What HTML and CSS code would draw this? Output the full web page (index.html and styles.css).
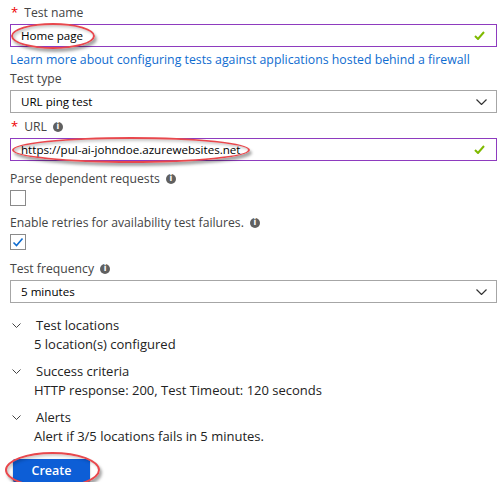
FILE: index.html
```html
<!DOCTYPE html>
<html lang="en">
<head>
<meta charset="utf-8">
<title>Availability test</title>
<link rel="stylesheet" href="styles.css">
</head>
<body>
<div class="form">
  <div class="label lbl-first"><span class="req">*</span>Test name</div>
  <div class="control input dirty">
    <span class="value">Home page</span>
    <svg class="ok" width="11" height="9" viewBox="0 0 11 9"><path d="M1 5 L4 8 L10 1" fill="none" stroke="#7fba00" stroke-width="2"/></svg>
    <span class="mark mark-name"></span>
  </div>
  <a class="link" href="#">Learn more about configuring tests against applications hosted behind a firewall</a>

  <div class="label lbl-type">Test type</div>
  <div class="control select">
    <span class="value">URL ping test</span>
    <svg class="chev" width="11" height="6" viewBox="0 0 11 6"><path d="M0.5 0.5 L5.5 5.5 L10.5 0.5" fill="none" stroke="#333" stroke-width="1.2"/></svg>
  </div>

  <div class="label lbl-url"><span class="req">*</span>URL<span class="info">i</span></div>
  <div class="control input dirty">
    <span class="value">https://pul-ai-johndoe.azurewebsites.net</span>
    <svg class="ok" width="11" height="9" viewBox="0 0 11 9"><path d="M1 5 L4 8 L10 1" fill="none" stroke="#7fba00" stroke-width="2"/></svg>
    <span class="mark mark-url"></span>
  </div>

  <div class="label lbl-parse">Parse dependent requests<span class="info">i</span></div>
  <div class="checkbox"></div>

  <div class="label lbl-retry">Enable retries for availability test failures.<span class="info">i</span></div>
  <div class="checkbox">
    <svg width="14" height="14" viewBox="0 0 14 14"><path d="M2.5 7.5 L5.5 10.5 L11.5 3.5" fill="none" stroke="#0f6cd0" stroke-width="1.6"/></svg>
  </div>

  <div class="label lbl-freq">Test frequency<span class="info">i</span></div>
  <div class="control select">
    <span class="value">5 minutes</span>
    <svg class="chev" width="11" height="6" viewBox="0 0 11 6"><path d="M0.5 0.5 L5.5 5.5 L10.5 0.5" fill="none" stroke="#333" stroke-width="1.2"/></svg>
  </div>

  <div class="section first-section">
    <div class="sec-head">
      <svg class="sec-chev" width="9" height="5" viewBox="0 0 9 5"><path d="M0.5 0.5 L4.5 4.5 L8.5 0.5" fill="none" stroke="#444" stroke-width="1"/></svg>
      <span>Test locations</span>
    </div>
    <div class="sec-body">5 location(s) configured</div>
  </div>
  <div class="section">
    <div class="sec-head">
      <svg class="sec-chev" width="9" height="5" viewBox="0 0 9 5"><path d="M0.5 0.5 L4.5 4.5 L8.5 0.5" fill="none" stroke="#444" stroke-width="1"/></svg>
      <span>Success criteria</span>
    </div>
    <div class="sec-body">HTTP response: 200, Test Timeout: 120 seconds</div>
  </div>
  <div class="section">
    <div class="sec-head">
      <svg class="sec-chev" width="9" height="5" viewBox="0 0 9 5"><path d="M0.5 0.5 L4.5 4.5 L8.5 0.5" fill="none" stroke="#444" stroke-width="1"/></svg>
      <span>Alerts</span>
    </div>
    <div class="sec-body">Alert if 3/5 locations fails in 5 minutes.</div>
  </div>

  <div class="actions">
    <button class="btn">Create<span class="mark mark-btn"></span></button>
  </div>
</div>
</body>
</html>
```
FILE: styles.css
```css
* { box-sizing: border-box; }
html, body { margin: 0; padding: 0; background: #fff; }
body {
  font-family: "Open Sans", "Noto Sans", sans-serif;
  font-size: 12.2px;
  color: #333;
}
.form {
  width: 497px;
  padding: 4px 0 0 10px;
}
.label {
  height: 17px;
  line-height: 17px;
  margin-bottom: 3px;
  color: #444;
  display: flex;
  align-items: center;
  white-space: nowrap;
}
.req { color: #e00; margin: 0 6px 0 1px; font-size: 13px; }
.info {
  display: inline-flex;
  align-items: center;
  justify-content: center;
  width: 10px;
  height: 10px;
  border-radius: 50%;
  background: #606060;
  color: #fff;
  font-family: "DejaVu Sans", sans-serif;
  font-weight: bold;
  font-size: 8px;
  line-height: 10px;
  margin-left: 6px;
}
.lbl-type { margin-top: 2px; }
.lbl-url { margin-top: 5px; }
.lbl-parse { margin-top: 9px; }
.lbl-retry { margin-top: 8px; }
.lbl-freq { margin-top: 10px; }

.control {
  position: relative;
  height: 23px;
  display: flex;
  align-items: center;
  padding: 0 9px 0 10px;
  color: #000;
  font-size: 11.6px;
}
.control .value { flex: 1; }
.input { border: 1px solid #8e3bbf; }
.select { border: 1px solid #a6a6a6; }
.ok { margin-right: 2px; }
.chev { margin-right: 0; }

.link {
  display: block;
  margin-top: 4px;
  height: 17px;
  line-height: 17px;
  font-size: 12.3px;
  color: #0f6cd0;
  text-decoration: none;
  white-space: nowrap;
}

.checkbox {
  width: 16px;
  height: 16px;
  border: 1px solid #8a8a8a;
  display: flex;
  align-items: center;
  justify-content: center;
}

.section { margin-top: 8px; }
.first-section { margin-top: 13px; }
.sec-head, .sec-body {
  font-size: 13px;
  line-height: 19px;
  height: 19px;
  color: #222;
  white-space: nowrap;
}
.sec-head { display: flex; align-items: center; }
.sec-chev { margin: 0 15px 0 2px; }
.sec-body { padding-left: 24px; }

.actions { margin-top: 13px; padding-left: 3px; }
.btn {
  position: relative;
  width: 77px;
  height: 23px;
  border: none;
  border-radius: 2px;
  background: #0d5ed6;
  color: #fff;
  font-family: "Open Sans", sans-serif;
  font-weight: 600;
  font-size: 12.5px;
  padding: 0;
  box-shadow: 0 1px 2px rgba(0,0,0,0.35);
}

.mark {
  position: absolute;
  border: 2.5px solid #e8484d;
  border-radius: 50%;
  box-shadow: 2px 3px 3px rgba(0,0,0,0.35), inset 2px 2px 3px rgba(0,0,0,0.2);
  pointer-events: none;
}
.mark-name { left: 0px; top: -2px; width: 84px; height: 26px; }
.mark-url { left: 1px; top: -2px; width: 238px; height: 26px; }
.mark-btn { left: -8px; top: -7px; width: 95px; height: 36px; }
```
